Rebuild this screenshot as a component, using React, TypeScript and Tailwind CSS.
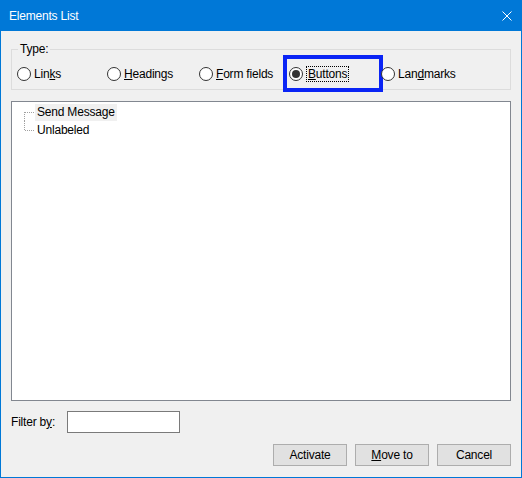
import React from "react";

const font = "font-['Segoe_UI','Liberation_Sans',Arial,sans-serif]";

type RadioProps = {
  label: React.ReactNode;
  width: string;
  checked?: boolean;
  focused?: boolean;
};

const Radio = ({ label, width, checked, focused }: RadioProps) => (
  <div className={`relative flex h-[16px] items-center gap-[3px] ${width}`}>
    <span className="flex h-[14px] w-[14px] shrink-0 items-center justify-center rounded-full border border-[#333333] bg-white">
      {checked && <span className="h-[8px] w-[8px] rounded-full bg-[#333333]" />}
    </span>
    {focused ? (
      <span className="border border-dotted border-black px-[1px] leading-[14px]">{label}</span>
    ) : (
      <span className="leading-[16px]">{label}</span>
    )}
    {focused && (
      <span className="pointer-events-none absolute -left-[6px] -top-[11px] h-[37px] w-[100px] border-4 border-[#0a24f5]" />
    )}
  </div>
);

const TreeLine = ({ first }: { first?: boolean }) => (
  <svg width="11" height="18" className="shrink-0" shapeRendering="crispEdges">
    <line
      x1="0.5"
      y1={first ? 9 : 0}
      x2="0.5"
      y2={first ? 18 : 9.5}
      stroke="#a0a0a0"
      strokeDasharray="1 1"
    />
    <line x1="1" y1="9.5" x2="11" y2="9.5" stroke="#a0a0a0" strokeDasharray="1 1" />
  </svg>
);

const Btn = ({ children }: { children: React.ReactNode }) => (
  <button className="flex h-[22px] w-[74px] items-center justify-center border border-[#adadad] bg-[#e1e1e1] leading-[16px] text-black">
    {children}
  </button>
);

export default function App() {
  return (
    <div
      className={`flex h-[478px] w-[522px] flex-col border-x border-b border-[#0078d7] text-[12px] tracking-[-0.2px] text-black ${font}`}
    >
      <div className="flex h-[31px] shrink-0 items-center justify-between bg-[#0078d7] pl-[8px] pr-[9px] text-white">
        <span className="leading-[16px]">Elements List</span>
        <svg width="10" height="10" viewBox="0 0 10 10">
          <path d="M0.5 0.5 L9.5 9.5 M9.5 0.5 L0.5 9.5" stroke="white" strokeWidth="1" />
        </svg>
      </div>

      <div className="flex flex-1 flex-col bg-[#f0f0f0] px-[10px]">
        <div className="relative mt-[18px] h-[41px] border border-[#dcdcdc] pl-[5px] pt-[16px]">
          <span className="absolute -top-[9px] left-[6px] bg-[#f0f0f0] px-[2px] leading-[16px]">Type:</span>
          <div className="flex">
            <Radio width="w-[90px]" label={<>Lin<u>k</u>s</>} />
            <Radio width="w-[92px]" label={<><u>H</u>eadings</>} />
            <Radio width="w-[90px]" label={<><u>F</u>orm fields</>} />
            <Radio width="w-[92px]" checked focused label={<><u>B</u>uttons</>} />
            <Radio width="w-[100px]" label={<>Lan<u>d</u>marks</>} />
          </div>
        </div>

        <div className="mt-[11px] h-[300px] border border-[#828790] bg-white pl-[12px] pt-[1px]">
          <div className="flex h-[18px] items-center">
            <TreeLine first />
            <span className="flex h-[17px] items-center bg-[#f0f0f0] px-[2px] leading-[16px]">Send Message</span>
          </div>
          <div className="flex h-[18px] items-center">
            <TreeLine />
            <span className="px-[2px] leading-[16px]">Unlabeled</span>
          </div>
        </div>

        <div className="mt-[10px] flex items-center">
          <span className="w-[56px] leading-[16px]">
            Filter b<u>y</u>:
          </span>
          <input className="h-[22px] w-[113px] border border-[#7a7a7a] bg-white outline-none" />
        </div>

        <div className="mt-[11px] flex justify-end gap-[8px]">
          <Btn>Activate</Btn>
          <Btn>
            <u>M</u>ove to
          </Btn>
          <Btn>Cancel</Btn>
        </div>
      </div>
    </div>
  );
}
